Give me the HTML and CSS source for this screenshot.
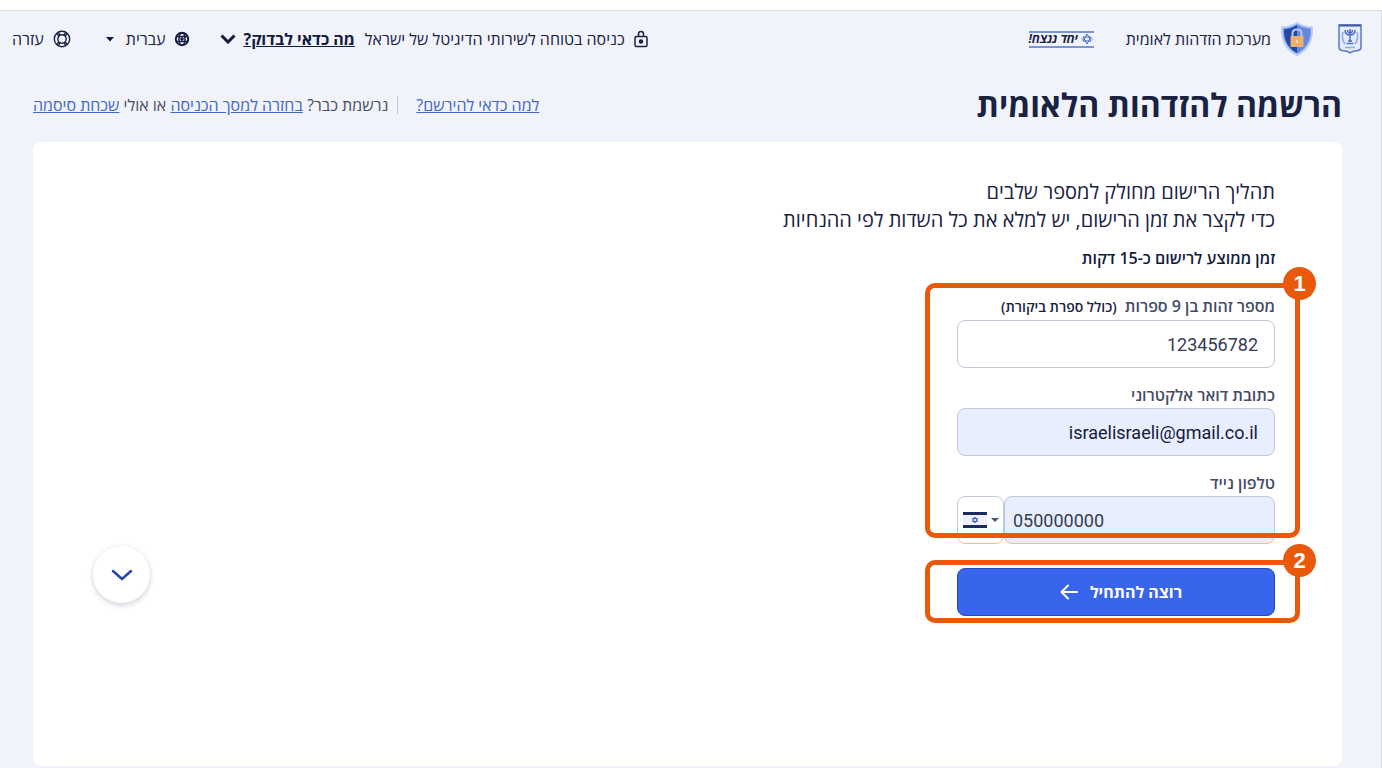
FILE: index.html
```html
<!DOCTYPE html>
<html lang="he" dir="rtl">
<head>
<meta charset="utf-8">
<meta name="viewport" content="width=device-width, initial-scale=1">
<title>הרשמה להזדהות הלאומית</title>
<link rel="stylesheet" href="styles.css">
</head>
<body>
<header class="topbar">
  <div class="brand">
    <svg class="emblem" viewBox="0 0 24 30" width="24" height="30" aria-hidden="true">
      <path d="M1 1h22v22q0 3-3 3.500l-5 .8-3 1.700-3-1.700-5-.8Q1 26 1 23z" fill="#e4ecfb" stroke="#5d78c6" stroke-width="1.500"/>
      <path d="M1 1.500h22" stroke="#3f589f" stroke-width="2"/>
      <path d="M7 6q0 5 5 5t5-5M9.500 6q0 3 2.500 3t2.500-3M12 5v13M8.500 19.500h7M10 17h4" fill="none" stroke="#4f6fc4" stroke-width="1.500"/>
      <path d="M5 8q-2 7 2 12M19 8q2 7-2 12M7 23.500h10" fill="none" stroke="#8fa7e2" stroke-width="1.500"/>
    </svg>
    <svg class="shield" viewBox="0 0 34 34" width="34" height="34" aria-hidden="true">
      <path d="M17 1q6 4 15 4.500Q33 25 17 33 1 25 2 5.500 11 5 17 1z" fill="#7195e6" stroke="#b9cdf7" stroke-width="2"/>
      <path d="M17 3Q11 7 4 7.500 4 24 17 31z" fill="#2347a8"/>
      <path d="M17 3q6 4 13 4.500Q30 24 17 31z" fill="#6388dc"/>
      <path d="M12.500 15v-3.500q0-4 4.500-4t4.500 4V15" fill="none" stroke="#b7c9f0" stroke-width="2"/>
      <rect x="10.500" y="14" width="13" height="11" rx="1" fill="#eeb071"/>
      <path d="M17 18v3" stroke="#f7dcba" stroke-width="2"/>
    </svg>
    <span class="brand-name">מערכת הזדהות לאומית</span>
    <span class="slogan">
      <svg viewBox="0 0 14 12" width="14" height="12" aria-hidden="true"><path d="M7 1l4 7H3zM7 11L3 4h8z" fill="none" stroke="#4169c9"/><path d="M1 6h2M11 6h2" stroke="#7f9fe4"/></svg>
      <b>יחד ננצח!</b>
    </span>
  </div>
  <nav class="tools">
    <div class="secure">
      <svg viewBox="0 0 16 18" width="16" height="18" fill="none" stroke="#1a2242" stroke-width="1.500" aria-hidden="true"><rect x="2" y="6.500" width="12" height="10" rx="1.500"/><path d="M5.500 6V4q0-2.500 2.500-2.500T10.500 4v2"/><circle cx="8" cy="11.500" r="1.500" fill="#1a2242"/></svg>
      <span>כניסה בטוחה לשירותי הדיגיטל של ישראל</span>
      <a class="check-link" href="#check">מה כדאי לבדוק?</a>
      <svg class="check-arrow" viewBox="0 0 16 10" width="16" height="10" fill="none" stroke="#131b3c" stroke-width="3" aria-hidden="true"><path d="M1.500 1.500L8 8l6.500-6.500"/></svg>
    </div>
    <button class="tool" type="button">
      <svg viewBox="0 0 16 16" width="16" height="16" fill="none" stroke="#131b3c" stroke-width="1.500" aria-hidden="true"><circle cx="8" cy="8" r="6.200" stroke-width="2"/><ellipse cx="8" cy="8" rx="3" ry="6"/><path d="M2 5.500h12M2 10.500h12"/><circle cx="8" cy="8" r="1" fill="#131b3c"/></svg>
      <span>עברית</span>
      <svg class="caret" viewBox="0 0 8 5" width="8" height="5" aria-hidden="true"><path d="M0 0h8L4 4.500z" fill="#131b3c"/></svg>
    </button>
    <a class="tool help" href="#help">
      <svg viewBox="0 0 18 18" width="18" height="18" fill="none" stroke="#1a2242" stroke-width="1.400" aria-hidden="true"><circle cx="9" cy="9" r="7.700"/><circle cx="9" cy="9" r="4.200"/><path d="M3.500 3.500l2.800 2.800M5.500 2.500l1.500 2.700M14.500 3.500l-2.800 2.800M12.500 2.500L11 5.200M3.500 14.500l2.800-2.800M5.500 15.500L7 12.800M14.500 14.500l-2.800-2.800M12.500 15.500L11 12.800"/></svg>
      <span>עזרה</span>
    </a>
  </nav>
</header>

<main class="page">
  <div class="heading">
    <h1>הרשמה להזדהות הלאומית</h1>
    <p class="links">
      <a class="why" href="#why">למה כדאי להירשם?</a>
      <span class="login">נרשמת כבר? <a href="#login">בחזרה למסך הכניסה</a> או אולי <a href="#forgot">שכחת סיסמה</a></span>
    </p>
  </div>

  <section class="card">
    <p class="intro">תהליך הרישום מחולק למספר שלבים<br>כדי לקצר את זמן הרישום, יש למלא את כל השדות לפי ההנחיות</p>
    <p class="duration">זמן ממוצע לרישום כ-15 דקות</p>
    <form class="form">
      <div class="fields">
        <div class="field">
          <label for="id">מספר זהות בן 9 ספרות <span class="note">(כולל ספרת ביקורת)</span></label>
          <input id="id" class="box" type="text" inputmode="numeric" value="123456782">
        </div>
        <div class="field">
          <label for="email">כתובת דואר אלקטרוני</label>
          <input id="email" class="box filled email" type="email" value="israelisraeli@gmail.co.il">
        </div>
        <div class="field">
          <label for="phone">טלפון נייד</label>
          <div class="phone">
            <input id="phone" class="box filled tel" type="tel" dir="ltr" value="050000000">
            <button class="box country" type="button" aria-haspopup="listbox" aria-label="ישראל">
              <svg viewBox="0 0 8 4" width="8" height="4" aria-hidden="true"><path d="M0 0h8L4 4z" fill="#505768"/></svg>
              <svg viewBox="0 0 24 16" width="24" height="16" aria-hidden="true"><path fill="#eef2fd" d="M0 0h24v16H0z"/><path fill="#1c2b60" d="M0 0h24v3H0zM0 13h24v3H0z"/><path d="M12 5l2.600 4.500H9.400zM12 11L9.400 6.500h5.200z" fill="none" stroke="#4266bd"/></svg>
            </button>
          </div>
        </div>
        <div class="frame"><span class="step">1</span></div>
      </div>
      <div class="action">
        <button class="submit" type="submit">
          <span>רוצה להתחיל</span>
          <svg viewBox="0 0 18 16" width="18" height="16" fill="none" stroke="#fff" stroke-width="2" stroke-linecap="round" stroke-linejoin="round" aria-hidden="true"><path d="M17 8H2M8 1.500L1.500 8 8 14.500"/></svg>
        </button>
        <div class="frame frame-action"><span class="step">2</span></div>
      </div>
    </form>
    <button class="scroll" type="button" aria-label="גלילה למטה">
      <svg viewBox="0 0 22 12" width="22" height="12" fill="none" stroke="#2447b5" stroke-width="2.500" stroke-linecap="round" stroke-linejoin="round" aria-hidden="true"><path d="M2 2l9 8 9-8"/></svg>
    </button>
  </section>
</main>
</body>
</html>
```
FILE: styles.css
```css
* { box-sizing: border-box; }

body {
  margin: 0;
  min-height: 100vh;
  display: flex;
  flex-direction: column;
  border-top: 10px solid #fff;
  background: #f0f3fa;
  color: #1a2242;
  font-family: "Open Sans", "Liberation Sans", sans-serif;
  font-size: 16px;
}

h1, p { margin: 0; }
button, input { font: inherit; color: inherit; }
svg { flex: none; }

.topbar {
  display: flex;
  justify-content: space-between;
  align-items: center;
  height: 57px;
  padding: 0 19px 0 12px;
  border-top: 1px solid #d9dce3;
  border-right: 1px solid #d9dce3;
}

.brand, .tools, .secure, .tool, .slogan { display: flex; align-items: center; }
.shield { margin-right: 24px; }
.brand-name { margin-right: 9px; }

.slogan {
  justify-content: center;
  gap: 2px;
  width: 65px;
  height: 17px;
  margin-right: 32px;
  border: solid #7893d6;
  border-width: 2px 0;
  font-size: 12px;
  line-height: 12px;
  white-space: nowrap;
  font-style: italic;
}

.secure span { margin-right: 8px; }
.check-link { margin-right: 10px; color: #131b3c; font-weight: 700; }
.check-arrow { margin-right: 8px; }

.tool {
  gap: 8px;
  margin-right: 30px;
  padding: 0;
  border: 0;
  background: none;
  text-decoration: none;
  color: inherit;
}
.caret { margin-right: 4px; }
.help { margin-right: 35px; gap: 9px; }

.page {
  flex: 1;
  display: flex;
  flex-direction: column;
  padding: 0 39px 2px 33px;
  border-right: 1px solid #d9dce3;
}

.heading {
  display: flex;
  justify-content: space-between;
  align-items: center;
  height: 75px;
}

h1 { font-size: 32px; line-height: 40px; font-weight: 700; }

.links { display: flex; align-items: center; font-weight: 500; }
.links a { color: #4467c6; }
.why { padding-left: 18px; }
.login { padding-right: 9px; border-right: 1px solid #c4c8d0; line-height: 18px; color: #484f61; word-break: normal; }

.card {
  position: relative;
  flex: 1;
  padding: 36px 67px 60px;
  border-radius: 8px;
  background: #fff;
}

.intro { font-size: 20px; line-height: 28px; }
.duration { margin-top: 12px; line-height: 24px; font-weight: 600; color: #131b3c; }

.form { width: 318px; margin-top: 24px; }
.fields, .action { position: relative; }
.fields { display: grid; gap: 15px; }

label { display: block; padding-bottom: 1px; line-height: 24px; font-weight: 600; color: #454c66; }
.note { margin-right: 4px; font-size: 14px; color: #1a2242; }

.box {
  display: block;
  width: 100%;
  height: 48px;
  padding: 0 16px;
  border: 1px solid #c3c7d9;
  border-radius: 8px;
  background: #fff;
  font-family: Roboto, sans-serif;
  font-size: 18px;
  color: #353c52;
}
.filled { background: #e8eefd; }
.email { color: #131b3c; }
.phone { display: flex; }
.tel { flex: 1; padding: 0 8px; text-align: left; }
.country { display: flex; align-items: center; justify-content: center; gap: 4px; width: 47px; padding: 0; }

.action { margin-top: 24px; }
.submit {
  display: flex;
  align-items: center;
  justify-content: center;
  gap: 12px;
  width: 100%;
  height: 48px;
  padding: 0 0 0 10px;
  border: 1px solid #2449bd;
  border-radius: 8px;
  background: #3865eb;
  color: #fff;
  font-weight: 700;
}

.frame {
  position: absolute;
  inset: -11px -25px 6px -32px;
  border: 5px solid #e9590c;
  border-radius: 10px;
  pointer-events: none;
}
.frame-action { inset: -8px -25px -7px -32px; }

.step {
  position: absolute;
  top: -21px;
  right: -21px;
  width: 33px;
  height: 33px;
  border-radius: 50%;
  background: #e9590c;
  color: #fff;
  font: 700 22px/33px "Liberation Sans", sans-serif;
  text-align: center;
}

.scroll {
  position: absolute;
  left: 60px;
  bottom: 163px;
  display: grid;
  place-items: center;
  width: 57px;
  height: 57px;
  padding: 0;
  border: 0;
  border-radius: 50%;
  background: #fff;
  box-shadow: 0 2px 5px 1px #d9dbe2;
}
```
